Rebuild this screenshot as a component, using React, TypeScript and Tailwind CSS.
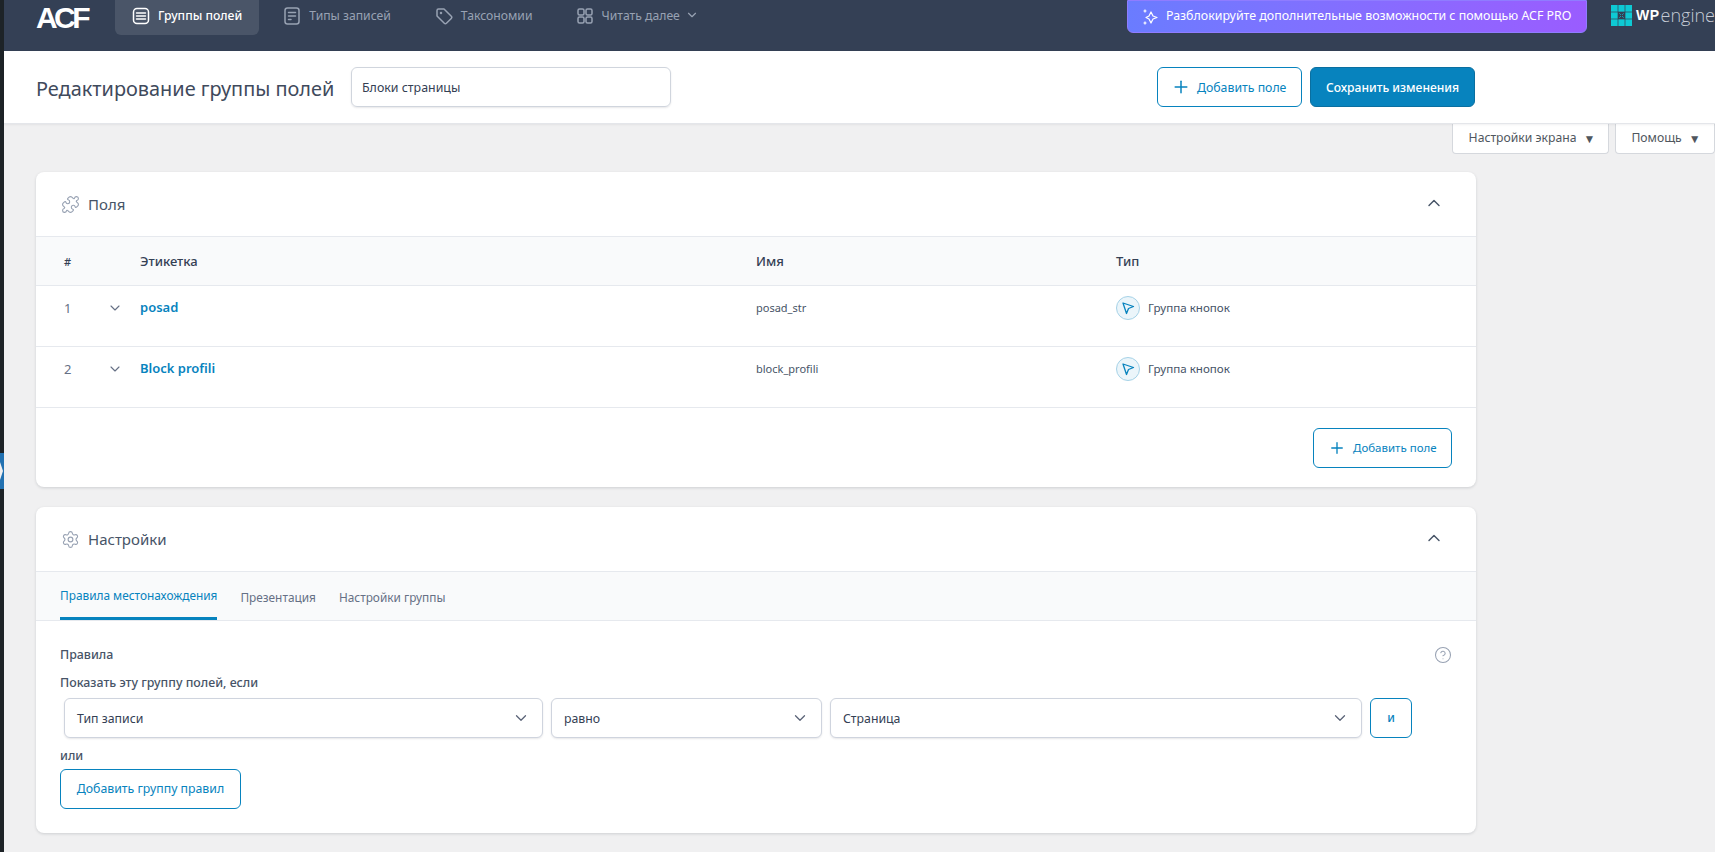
import React from "react";
import { ChevronDown, ChevronUp, Settings, HelpCircle, Plus, Puzzle } from "lucide-react";

const Font = "[font-family:'Noto_Sans','Open_Sans',sans-serif]";

function Logo() {
  return (
    <div className="w-[66px] h-[35px] text-white font-black text-[30px] leading-[35px] tracking-[-3.6px] [font-family:'Liberation_Sans',sans-serif]">
      ACF
    </div>
  );
}

function NavItem({ icon, label, active, className = "" }: { icon: React.ReactNode; label: string; active?: boolean; className?: string }) {
  return (
    <div className={`h-[35px] flex items-center gap-[8px] rounded-b-[6px] px-[17px] pb-[3px] text-[12.2px] ${active ? "bg-[#4a5568] text-white font-medium" : "text-[#98a2b3]"} ${className}`}>
      {icon}
      <span>{label}</span>
    </div>
  );
}

const IconBase = ({ children }: { children: React.ReactNode }) => (
  <svg width="18" height="18" viewBox="0 0 18 18" fill="none" stroke="currentColor" strokeWidth="1.5" strokeLinecap="round" strokeLinejoin="round">
    {children}
  </svg>
);

function TypeIcon() {
  return (
    <div className="w-[24px] h-[24px] rounded-full bg-[#ebf5fa] border border-[#a5d2e7] flex items-center justify-center shrink-0">
      <svg width="14" height="14" viewBox="0 0 14 14" fill="none" stroke="#0783be" strokeWidth="1.3" strokeLinejoin="round">
        <path d="M2 2 L12.5 5.5 L7.5 7.5 L5.5 12.5 Z" />
      </svg>
    </div>
  );
}

function FieldRow({ n, label, name }: { n: number; label: string; name: string }) {
  return (
    <div className="h-[61px] flex border-b border-[#e6e9ee] pt-[12px]">
      <div className="w-[71px] pl-[28px] text-[13px] leading-[20px] text-[#667085]">{n}</div>
      <div className="w-[33px] pt-[2px] text-[#667085]">
        <ChevronDown size={16} strokeWidth={1.7} />
      </div>
      <div className="w-[616px] text-[13px] leading-[18px] font-semibold text-[#0783be]">{label}</div>
      <div className="w-[360px] pt-[1px] text-[11px] leading-[18px] text-[#475467]">{name}</div>
      <div className="flex items-start gap-[8px] -mt-[2px] text-[11.6px] leading-[24px] text-[#475467]">
        <TypeIcon />
        <span>Группа кнопок</span>
      </div>
    </div>
  );
}

function Select({ label, className }: { label: string; className: string }) {
  return (
    <div className={`h-[40px] flex items-center justify-between rounded-[6px] border border-[#cfd4de] shadow-[0_1px_2px_rgba(16,24,40,0.1)] bg-white pl-[12px] pr-[12px] text-[12.3px] text-[#344054] ${className}`}>
      <span className="pt-[2px]">{label}</span>
      <ChevronDown size={18} strokeWidth={1.7} className="text-[#5b6478]" />
    </div>
  );
}

function PanelHead({ icon, title }: { icon: React.ReactNode; title: string }) {
  return (
    <div className="h-[65px] flex items-center justify-between pl-[25px] pr-[32px] border-b border-[#e6e9ee]">
      <div className="flex items-center gap-[8px] text-[15px] text-[#475467]">
        {icon}
        <span>{title}</span>
      </div>
      <ChevronUp size={20} strokeWidth={1.7} className="text-[#475467] mb-[3px]" />
    </div>
  );
}

function OutlineBtn({ className, children }: { className: string; children: React.ReactNode }) {
  return (
    <div className={`h-[40px] flex items-center rounded-[6px] border border-[#0783be] text-[#0783be] bg-white ${className}`}>
      {children}
    </div>
  );
}

export default function App() {
  return (
    <div className={`w-[1715px] h-[852px] overflow-hidden flex bg-[#f0f0f1] ${Font}`}>
      <div className="w-[4px] h-full bg-[#1d2327] relative shrink-0">
        <svg className="absolute left-0 top-[453px]" width="4" height="36" viewBox="0 0 4 36">
          <rect width="4" height="36" fill="#2271b1" />
          <path d="M0 9 L3 18 L0 27 Z" fill="#f0f0f1" />
        </svg>
      </div>
      <div className="flex-1 min-w-0">
        <div className="h-[51px] bg-[#344055] flex items-start justify-between pl-[31px]">
          <div className="flex items-start">
            <div className="w-[80px] pl-[1px]"><Logo /></div>
            <div className="flex gap-[7px]">
              <NavItem
                active
                label="Группы полей"
                icon={<IconBase><rect x="1.5" y="1.5" width="15" height="15" rx="3.5" /><path d="M4.5 6h9M4.5 9h9M4.5 12h9" /></IconBase>}
              />
              <NavItem
                label="Типы записей"
                icon={<IconBase><rect x="2" y="1" width="14" height="16" rx="2.5" /><path d="M5.5 5.5h7M5.5 9h7M5.5 12.5h2.5" /></IconBase>}
              />
              <NavItem
                className="ml-[3px]"
                label="Таксономии"
                icon={<IconBase><path d="M2 3.5a1.5 1.5 0 0 1 1.5-1.5H9l7.3 7.3a1.5 1.5 0 0 1 0 2.1l-4.9 4.9a1.5 1.5 0 0 1-2.1 0L2 9z" /><circle cx="6" cy="6" r="0.5" /></IconBase>}
              />
              <NavItem
                className="ml-[2px]"
                label="Читать далее"
                icon={<IconBase><rect x="2" y="2" width="6" height="6" rx="1.5" /><rect x="10" y="2" width="6" height="6" rx="1.5" /><rect x="2" y="10" width="6" height="6" rx="1.5" /><rect x="10" y="10" width="6" height="6" rx="1.5" /></IconBase>}
              />
            </div>
            <ChevronDown size={14} className="text-[#98a2b3] -ml-[12px] mt-[8px]" />
          </div>
          <div className="flex items-start">
            <div className="w-[460px] h-[33px] rounded-b-[6px] border border-[#8f7cff] bg-gradient-to-r from-[#6a7cff] to-[#9a5cff] flex items-center gap-[7px] pl-[13px] text-[12.4px] text-white whitespace-nowrap">
              <svg width="18" height="18" viewBox="0 0 18 18" fill="none" stroke="white" strokeWidth="1.2" strokeLinejoin="round">
                <path d="M10 4 L12 8 L16 9.5 L12 11 L10 15 L8 11 L5 9.5 L8 8 Z" />
                <path d="M4 1.5v3M2.5 3h3M4 13.5v3M2.5 15h3" />
              </svg>
              <span>Разблокируйте дополнительные возможности с помощью ACF PRO</span>
            </div>
            <div className="ml-[24px] flex items-center gap-[4px] h-[30px] w-[104px] overflow-hidden">
              <svg width="21" height="21" viewBox="0 0 21 21" className="shrink-0">
                <rect width="21" height="21" fill="#0ecad4" />
                <path d="M7 0v21M14 0v21M0 7h21M0 14h21" stroke="#344055" strokeWidth="0.7" />
                <rect x="7" y="7" width="7" height="7" fill="#344055" />
                <path d="M8.5 8.5l1.2 1.2M12.5 8.5l-1.2 1.2M8.5 12.5l1.2-1.2M12.5 12.5l-1.2-1.2" stroke="#0ecad4" strokeWidth="1" />
              </svg>
              <span className="text-[14px] font-black text-white [font-family:'Liberation_Sans',sans-serif] tracking-[0.5px]">WP</span>
              <span className="-ml-[3px] text-[18px] font-light text-[#c5cbd5] [font-family:'Open_Sans',sans-serif] whitespace-nowrap">engine</span>
            </div>
          </div>
        </div>

        <div className="h-[73px] bg-white border-b border-[#e4e6ea] shadow-[0_1px_2px_rgba(16,24,40,0.06)] flex items-center pl-[32px] relative">
          <h1 className="w-[315px] pt-[3px] text-[19.9px] text-[#3f4a5c] font-normal">Редактирование группы полей</h1>
          <div className="w-[320px] h-[40px] flex items-center rounded-[6px] border border-[#d0d5dd] shadow-[0_1px_2px_rgba(16,24,40,0.1)] pl-[10px] pt-[3px] text-[12.4px] text-[#344054]">
            Блоки страницы
          </div>
          <div className="ml-[486px] flex gap-[8px]">
            <OutlineBtn className="w-[145px] pl-[13px] gap-[6px] text-[12.3px]"><Plus size={20} strokeWidth={1.8} /> <span className="pt-[3px]">Добавить поле</span></OutlineBtn>
            <div className="w-[165px] h-[40px] pt-[3px] rounded-[6px] bg-[#0783be] border border-[#0a6fa0] text-white text-[12.1px] font-medium flex items-center justify-center">Сохранить изменения</div>
          </div>
        </div>

        <div className="flex justify-end gap-[6px] h-[29px]">
          <div className="w-[157px] h-[30px] pl-[3px] rounded-b-[4px] bg-white border border-t-0 border-[#d5d8dd] flex items-center justify-center gap-[7px] text-[12.2px] text-[#50575e]">
            Настройки экрана <span className="text-[12px]">▼</span>
          </div>
          <div className="w-[100px] h-[30px] pl-[2px] rounded-b-[4px] bg-white border border-t-0 border-[#d5d8dd] flex items-center justify-center gap-[7px] text-[12.2px] text-[#50575e]">
            Помощь <span className="text-[12px]">▼</span>
          </div>
        </div>

        <div className="w-[1440px] ml-[32px] mt-[19px] flex flex-col gap-[20px]">
          <div className="h-[315px] bg-white rounded-[8px] shadow-[0_1px_3px_rgba(16,24,40,0.15)] overflow-hidden">
            <PanelHead title="Поля" icon={<Puzzle size={19} strokeWidth={1.4} className="text-[#98a2b3]" />} />
            <div className="h-[49px] bg-[#f9fafb] border-b border-[#e6e9ee] flex items-center pt-[2px] text-[13px] font-medium text-[#344054]">
              <div className="w-[104px] pl-[28px] text-[11px]">#</div>
              <div className="w-[616px]">Этикетка</div>
              <div className="w-[360px]">Имя</div>
              <div>Тип</div>
            </div>
            <FieldRow n={1} label="posad" name="posad_str" />
            <FieldRow n={2} label="Block profili" name="block_profili" />
            <div className="flex justify-end pt-[20px] pr-[24px]">
              <OutlineBtn className="w-[139px] pl-[14px] gap-[7px] text-[11.5px]"><Plus size={18} strokeWidth={1.8} /> <span>Добавить поле</span></OutlineBtn>
            </div>
          </div>

          <div className="h-[326px] bg-white rounded-[8px] shadow-[0_1px_3px_rgba(16,24,40,0.15)] overflow-hidden">
            <PanelHead title="Настройки" icon={<Settings size={19} strokeWidth={1.4} className="text-[#98a2b3]" />} />
            <div className="h-[49px] bg-[#f9fafb] border-b border-[#e6e9ee] flex items-end gap-[23px] pl-[24px] text-[11.85px]">
              <div className="h-[48px] flex items-center border-b-[3px] border-[#0783be] text-[#0783be] pt-[3px]">Правила местонахождения</div>
              <div className="h-[48px] flex items-center pt-[3px] text-[#667085]">Презентация</div>
              <div className="h-[48px] flex items-center pt-[3px] text-[#667085]">Настройки группы</div>
            </div>
            <div className="px-[24px] pt-[25px] relative">
              <div className="absolute right-[24px] top-[25px] text-[#98a2b3]"><HelpCircle size={18} strokeWidth={1.4} /></div>
              <div className="text-[12.4px] leading-[18px] font-medium text-[#475467]">Правила</div>
              <div className="mt-[10px] text-[12.4px] leading-[18px] font-medium text-[#475467]">Показать эту группу полей, если</div>
              <div className="mt-[6px] ml-[4px] flex gap-[8px]">
                <Select label="Тип записи" className="w-[479px]" />
                <Select label="равно" className="w-[271px]" />
                <Select label="Страница" className="w-[532px]" />
                <OutlineBtn className="w-[42px] justify-center text-[12px] font-medium">и</OutlineBtn>
              </div>
              <div className="mt-[9px] text-[12.4px] leading-[18px] font-medium text-[#475467]">или</div>
              <OutlineBtn className="mt-[4px] w-[181px] justify-center text-[12.3px]">Добавить группу правил</OutlineBtn>
            </div>
          </div>
        </div>
      </div>
    </div>
  );
}
